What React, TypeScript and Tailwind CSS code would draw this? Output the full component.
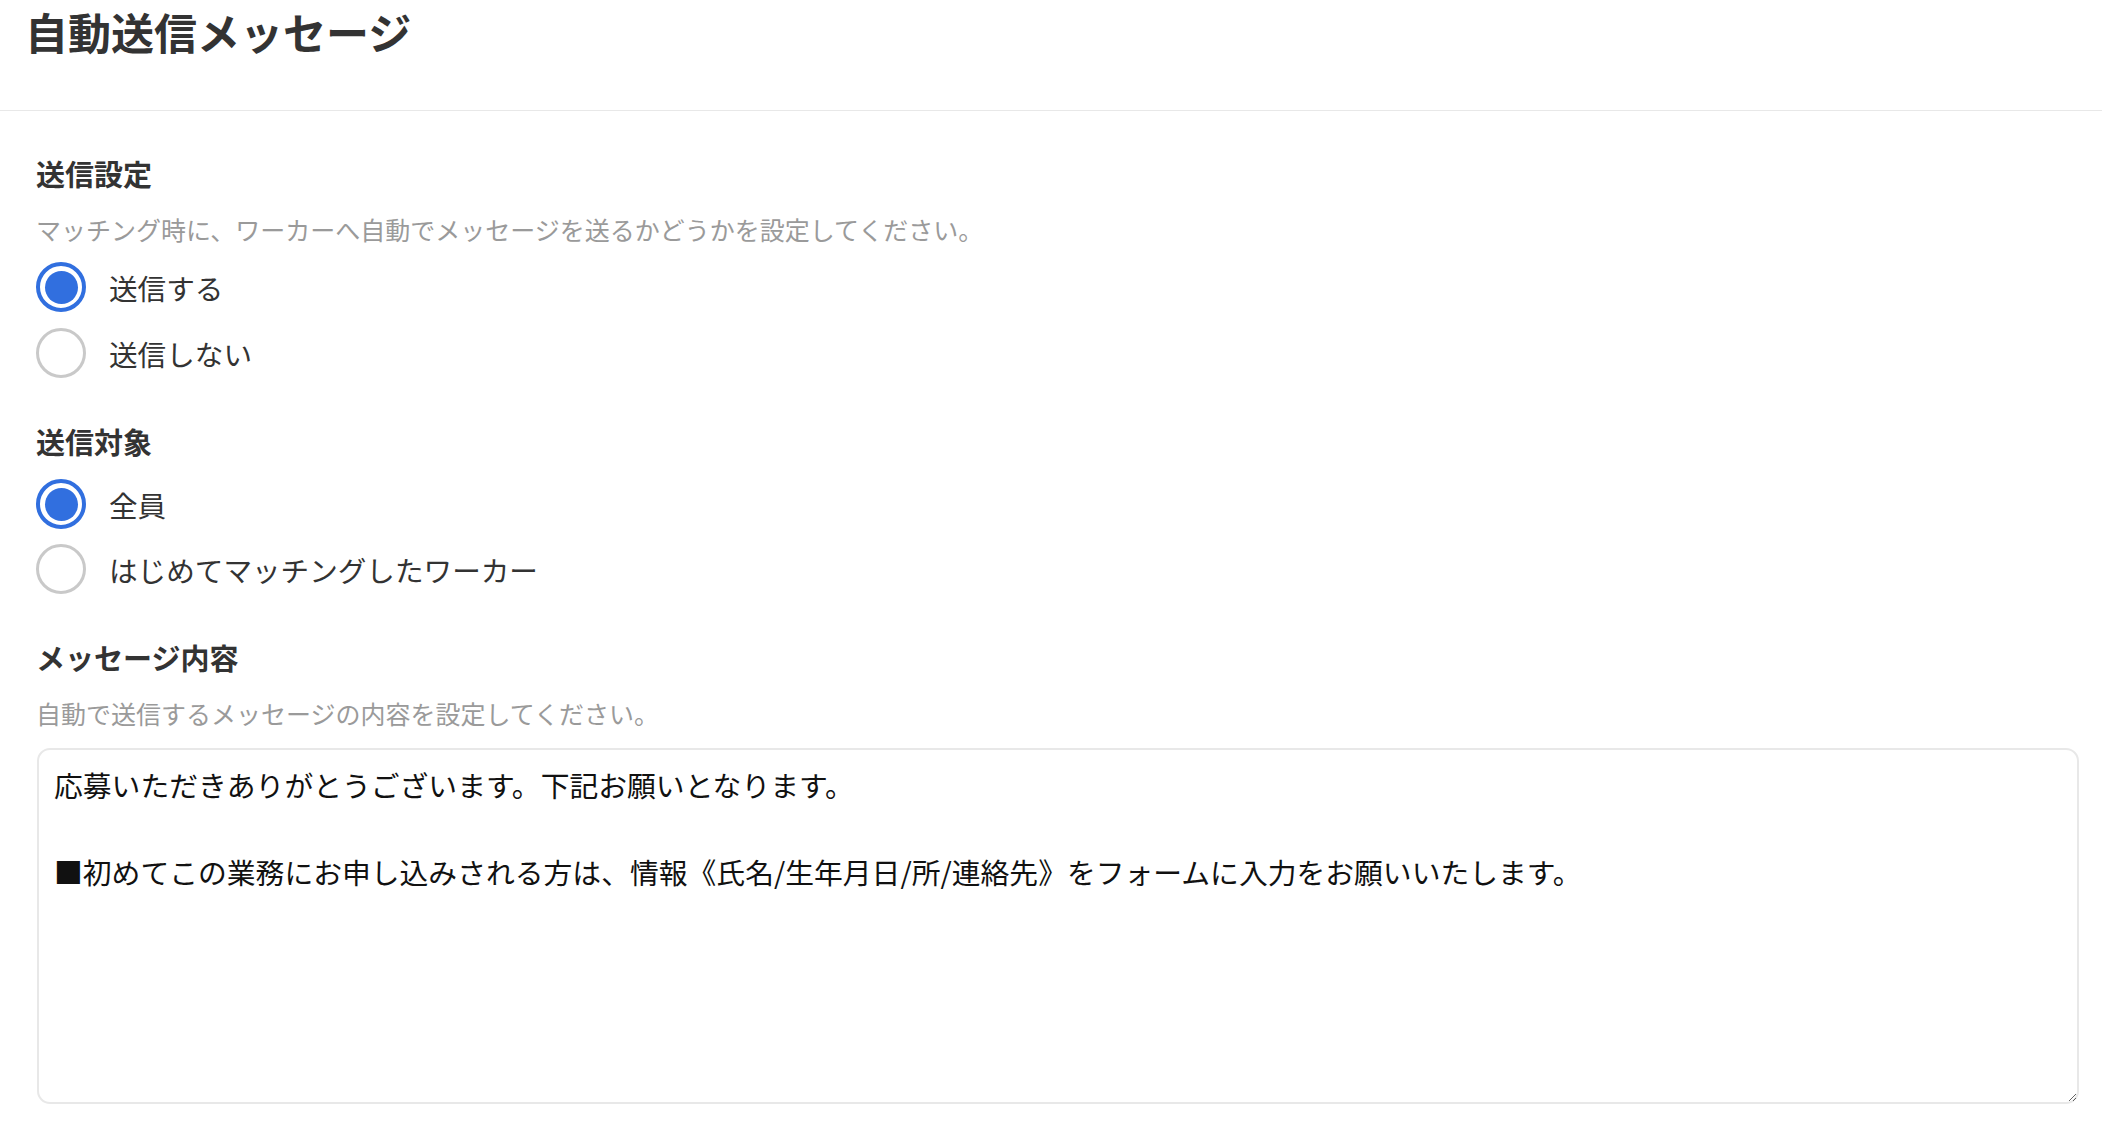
const font = { fontFamily: '"Noto Sans CJK JP", "Noto Sans", sans-serif' };

const message =
  "応募いただきありがとうございます。下記お願いとなります。\n\n■初めてこの業務にお申し込みされる方は、情報《氏名/生年月日/所/連絡先》をフォームに入力をお願いいたします。";

function Radio({ label, checked }: { label: string; checked?: boolean }) {
  return (
    <label className="flex items-center gap-[23px] h-[50px] cursor-pointer">
      <span
        className={`flex items-center justify-center w-[50px] h-[50px] rounded-full shrink-0 ${
          checked ? "border-[4px] border-[#316fdf]" : "border-[3px] border-[#c9c9c9]"
        }`}
      >
        {checked && <span className="w-[33px] h-[33px] rounded-full bg-[#316fdf]" />}
      </span>
      <span className="text-[28.6px] leading-[29px] text-[#333]">{label}</span>
    </label>
  );
}

function Heading({ children }: { children: string }) {
  return <div className="text-[29px] leading-[29px] font-bold text-[#333]">{children}</div>;
}

function Note({ children }: { children: string }) {
  return <div className="text-[25px] leading-[25px] text-[#9a9a9a]">{children}</div>;
}

export default function App() {
  return (
    <div className="min-h-screen bg-white" style={font}>
      <div className="h-[111px] border-b border-[#e8e8e8] pl-[25px] pt-[9px]">
        <h1 className="text-[43px] leading-[44px] font-bold text-[#333]">自動送信メッセージ</h1>
      </div>

      <div className="pl-[36px] pr-[24px] pt-[48px]">
        <Heading>送信設定</Heading>
        <div className="mt-[29px]">
          <Note>マッチング時に、ワーカーへ自動でメッセージを送るかどうかを設定してください。</Note>
        </div>
        <div className="mt-[20px] flex flex-col gap-[16px]">
          <Radio label="送信する" checked />
          <Radio label="送信しない" />
        </div>

        <div className="mt-[49px]">
          <Heading>送信対象</Heading>
        </div>
        <div className="mt-[23px] flex flex-col gap-[15px]">
          <Radio label="全員" checked />
          <Radio label="はじめてマッチングしたワーカー" />
        </div>

        <div className="mt-[49px]">
          <Heading>メッセージ内容</Heading>
        </div>
        <div className="mt-[29px]">
          <Note>自動で送信するメッセージの内容を設定してください。</Note>
        </div>
        <textarea
          className="mt-[22px] block w-[2042px] ml-[1px] h-[356px] border-2 border-[#e8e8e8] rounded-[13px] pl-[15px] pr-[15px] pt-[13px] text-[28.8px] leading-[43.5px] text-[#111] outline-none"
          style={font}
          defaultValue={message}
        />
      </div>
    </div>
  );
}
